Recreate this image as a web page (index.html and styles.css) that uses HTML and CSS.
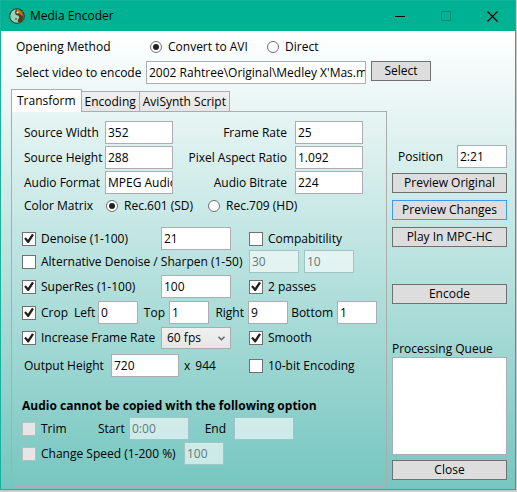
FILE: index.html
```html
<!DOCTYPE html>
<html lang="en">
<head>
<meta charset="utf-8">
<meta name="viewport" content="width=device-width, initial-scale=1">
<title>Media Encoder</title>
<link rel="stylesheet" href="styles.css">
</head>
<body>
<div class="window">
  <header class="titlebar">
    <svg class="app-icon" width="16" height="16" viewBox="0 0 16 16" aria-hidden="true">
      <circle cx="8" cy="8" r="7.8" fill="#2b3a2e"/>
      <circle cx="8" cy="8" r="6.800" fill="#93d3bd"/>
      <path d="M7.500 1.200A6.800 6.800 0 0 1 10.500 14.300C8.600 14.500 8.200 12.500 9.500 11C11 9 10 7.800 8 7.300C5.500 6.500 5.500 3 7.500 1.200Z" fill="#5a3a14"/>
      <path d="M8 1.500C11 1.600 13.800 4.500 13.900 7.800C12 7.500 11.500 6 10 5.500C8 4.500 7 3 8 1.500Z" fill="#c07a1e"/>
      <circle cx="8.500" cy="4.500" r="1.100" fill="#e0e3b8"/>
      <circle cx="7" cy="11" r="1.100" fill="#8a6a34"/>
    </svg>
    <h1 class="title">Media Encoder</h1>
    <div class="caption-buttons">
      <button class="caption" type="button" aria-label="Minimize"><svg width="11" height="11" viewBox="0 0 11 11"><path d="M0 5.500H10" stroke="#000" fill="none"/></svg></button>
      <button class="caption" type="button" aria-label="Maximize" disabled><svg width="11" height="11" viewBox="0 0 11 11"><path d="M.5 .5H9.500V9.500H.5Z" stroke="#078871" fill="none"/></svg></button>
      <button class="caption" type="button" aria-label="Close window"><svg width="11" height="11" viewBox="0 0 11 11"><path d="M.5 .5L10.500 10.500M10.500 .5L.5 10.500" stroke="#000" stroke-width="1.200" fill="none"/></svg></button>
    </div>
  </header>

  <main class="client">
    <div class="source">
      <div class="source-row method" role="radiogroup" aria-labelledby="method">
        <span id="method">Opening Method</span>
        <label class="option"><input type="radio" name="method" checked>Convert to AVI</label>
        <label class="option"><input type="radio" name="method">Direct</label>
      </div>
      <div class="source-row file">
        <label for="video">Select video to encode</label>
        <input class="field" id="video" type="text" value="2002 Rahtree\Original\Medley X'Mas.mpg">
        <button class="button" type="button">Select</button>
      </div>
    </div>

    <div class="columns">
      <section class="tabs">
        <div class="tab-list" role="tablist">
          <button class="tab selected" type="button" role="tab" aria-selected="true">Transform</button>
          <button class="tab" type="button" role="tab" aria-selected="false">Encoding</button>
          <button class="tab" type="button" role="tab" aria-selected="false">AviSynth Script</button>
        </div>
        <div class="panel" role="tabpanel">
          <div class="info">
            <label for="width">Source Width</label>
            <input class="field" id="width" type="text" value="352">
            <label class="end" for="rate">Frame Rate</label>
            <input class="field" id="rate" type="text" value="25">
            <label for="height">Source Height</label>
            <input class="field" id="height" type="text" value="288">
            <label class="end" for="ratio">Pixel Aspect Ratio</label>
            <input class="field" id="ratio" type="text" value="1.092">
            <label for="format">Audio Format</label>
            <input class="field" id="format" type="text" value="MPEG Audio">
            <label class="end" for="bitrate">Audio Bitrate</label>
            <input class="field" id="bitrate" type="text" value="224">
          </div>
          <div class="matrix" role="radiogroup" aria-labelledby="matrix">
            <span id="matrix">Color Matrix</span>
            <label class="option"><input type="radio" name="matrix" checked>Rec.601 (SD)</label>
            <label class="option"><input type="radio" name="matrix">Rec.709 (HD)</label>
          </div>

          <div class="filters">
            <div class="row">
              <label class="option"><input type="checkbox" checked>Denoise (1-100)</label>
              <input class="field wide" type="text" value="21" aria-label="Denoise strength">
              <label class="option"><input type="checkbox">Compabitility</label>
            </div>
            <div class="row alternative">
              <label class="option span"><input type="checkbox">Alternative Denoise / Sharpen (1-50)</label>
              <div class="pair">
                <input class="field" type="text" value="30" aria-label="Alternative denoise" disabled>
                <input class="field" type="text" value="10" aria-label="Sharpen" disabled>
              </div>
            </div>
            <div class="row">
              <label class="option"><input type="checkbox" checked>SuperRes (1-100)</label>
              <input class="field wide" type="text" value="100" aria-label="SuperRes strength">
              <label class="option"><input type="checkbox" checked>2 passes</label>
            </div>
            <div class="crop">
              <label class="option"><input type="checkbox" checked>Crop</label>
              <label for="left">Left</label><input class="field" id="left" type="text" value="0">
              <label for="top">Top</label><input class="field" id="top" type="text" value="1">
              <label for="right">Right</label><input class="field" id="right" type="text" value="9">
              <label for="bottom">Bottom</label><input class="field" id="bottom" type="text" value="1">
            </div>
            <div class="row">
              <label class="option"><input type="checkbox" checked>Increase Frame Rate</label>
              <span class="combo wide">
                <select aria-label="Frame rate"><option>60 fps</option></select>
                <svg width="7" height="5" viewBox="0 0 7 5" aria-hidden="true"><path d="M.5 .8L3.500 3.800L6.500 .8" stroke="#606060" stroke-width="1.400" fill="none"/></svg>
              </span>
              <label class="option"><input type="checkbox" checked>Smooth</label>
            </div>
            <div class="row output">
              <div class="size span">
                <label for="outheight">Output Height</label>
                <input class="field" id="outheight" type="text" value="720">
                <span>x</span><span>944</span>
              </div>
              <label class="option"><input type="checkbox">10-bit Encoding</label>
            </div>
          </div>

          <h2 class="heading">Audio cannot be copied with the following option</h2>
          <div class="trim">
            <label class="option"><input type="checkbox" disabled>Trim</label>
            <label for="start">Start</label><input class="field" id="start" type="text" value="0:00" disabled>
            <label class="end" for="end">End</label><input class="field" id="end" type="text" disabled>
          </div>
          <div class="speed">
            <label class="option"><input type="checkbox" disabled>Change Speed (1-200 %)</label>
            <input class="field" type="text" value="100" aria-label="Speed" disabled>
          </div>
        </div>
      </section>

      <aside class="side">
        <div class="position">
          <label for="position">Position</label>
          <input class="field" id="position" type="text" value="2:21">
        </div>
        <div class="previews">
          <button class="button" type="button">Preview Original</button>
          <button class="button active" type="button">Preview Changes</button>
          <button class="button" type="button">Play In MPC-HC</button>
        </div>
        <button class="button encode" type="button">Encode</button>
        <label class="queue-label" for="queue">Processing Queue</label>
        <select class="queue" id="queue" size="4"></select>
        <button class="button" type="button">Close</button>
      </aside>
    </div>
  </main>
</div>
</body>
</html>
```
FILE: styles.css
```css
* {
  box-sizing: border-box;
}

body {
  margin: 0;
  min-height: 100vh;
  display: flex;
  padding: 0 1px 2px 0;
  background: #cfcaca;
  color: #000;
  font: 12px/16px "Open Sans", "Noto Sans", sans-serif;
  white-space: nowrap;
}

button,
input,
select {
  margin: 0;
  color: inherit;
  font: inherit;
}

.window {
  flex: 1;
  min-width: 0;
  display: flex;
  flex-direction: column;
  border: 1px solid #14b39a;
}

.titlebar {
  display: flex;
  align-items: center;
  height: 30px;
  padding-left: 8px;
  background: #00b294;
}

.title {
  margin: 0 0 0 5px;
  font-size: 12px;
  font-weight: 400;
}

.caption-buttons {
  display: flex;
  margin-left: auto;
}

.caption {
  display: grid;
  place-items: center;
  width: 46px;
  height: 28px;
  padding: 0;
  border: 0;
  background: none;
}

.client {
  flex: 1;
  display: flex;
  flex-direction: column;
  padding: 6px 8px 2px 10px;
  background: linear-gradient(#fff, #76c6c0);
}

.source {
  padding-left: 5px;
}

.source-row {
  display: grid;
  align-items: center;
}

.method {
  grid-template-columns: 134px 117px 1fr;
  height: 20px;
}

.file {
  grid-template-columns: 130px minmax(0, 220px) 60px;
  margin-top: 4px;
}

.file .button {
  align-self: start;
  margin-left: 5px;
  width: 60px;
}

.option {
  display: flex;
  align-items: center;
  gap: 5px;
}

.field {
  width: 100%;
  min-width: 0;
  height: 23px;
  padding: 0 0 0 2px;
  border: 1px solid #abadb3;
  border-radius: 0;
  background: #fff;
  outline: 0;
}

.field:disabled {
  border-color: #9fc4c4;
  background: #fff9;
  color: #5f7a78;
}

input[type="checkbox"],
input[type="radio"] {
  appearance: none;
  flex: none;
  display: grid;
  place-items: center;
  width: 14px;
  height: 14px;
  border: 1px solid #707070;
  background: #fff;
}

input[type="radio"] {
  width: 12px;
  height: 12px;
  margin-right: 1px;
  border-radius: 50%;
}

input[type="radio"]:checked::before {
  content: "";
  width: 6px;
  height: 6px;
  border-radius: 50%;
  background: #212121;
}

input[type="checkbox"]:checked::before {
  content: "";
  width: 10px;
  height: 10px;
  background: #212121;
  clip-path: polygon(2% 52%, 18% 38%, 40% 62%, 80% 2%, 100% 14%, 48% 96%, 36% 96%);
}

input[type="checkbox"]:disabled {
  border-color: #bcbcbc;
  background: #e6e6e6;
}

.button {
  height: 20px;
  padding: 0;
  border: 1px solid #707070;
  background: #ddd;
  line-height: 18px;
}

.button.active {
  border-color: #3c9af0;
}

.columns {
  flex: 1;
  display: grid;
  grid-template-columns: minmax(0, 1fr) 115px;
  gap: 5px;
  margin-top: 5px;
}

.tabs {
  display: flex;
  flex-direction: column;
}

.tab-list {
  display: flex;
  align-items: flex-end;
}

.tab {
  height: 20px;
  padding: 0 3px;
  border: 1px solid #acacac;
  border-bottom: 0;
  border-left-width: 0;
  background: linear-gradient(#f0f0f0, #e5e5e5);
}

.tab.selected {
  z-index: 1;
  height: 23px;
  margin-bottom: -1px;
  padding: 0 5px;
  border-left-width: 1px;
  background: #fff;
}

.panel {
  flex: 1;
  padding: 9px 9px 0 10px;
  border: 1px solid #acacac;
}

.info {
  display: grid;
  grid-template-columns: 81px 68px 122px 68px;
  row-gap: 2px;
  align-items: center;
  padding-left: 2px;
}

.end {
  justify-self: end;
  padding-right: 8px;
}

.matrix {
  display: grid;
  grid-template-columns: 82px 102px 1fr;
  align-items: center;
  height: 24px;
  padding-left: 2px;
}

.filters {
  display: grid;
  gap: 3px;
  margin-top: 9px;
}

.row {
  display: grid;
  grid-template-columns: 139px 88px minmax(0, 1fr);
  align-items: center;
}

.alternative {
  margin: -3px 0 -1px;
}

.wide {
  width: 70px;
}

.span {
  grid-column: span 2;
}

.pair {
  display: grid;
  grid-template-columns: 50px 50px;
  gap: 5px;
}

.crop {
  display: grid;
  grid-template-columns: 52px 24px 40px 31px 40px 39px 40px 49px 40px;
  align-items: center;
}

.crop label + .field ~ label {
  justify-self: end;
  padding-right: 4px;
}

.combo {
  display: grid;
  align-items: center;
}

.combo > * {
  grid-area: 1 / 1;
}

.combo select {
  appearance: none;
  width: 100%;
  height: 22px;
  padding: 0 0 0 5px;
  border: 1px solid #acacac;
  border-radius: 0;
  background: linear-gradient(#f0f0f0, #e5e5e5);
}

.combo svg {
  justify-self: end;
  margin-right: 6px;
  pointer-events: none;
}

.output {
  margin-top: 2px;
}

.size {
  display: flex;
  align-items: center;
  gap: 5px;
  padding-left: 2px;
}

.size label {
  width: 82px;
}

.size .field {
  width: 68px;
}

.heading {
  margin: 21px 0 3px;
  font-size: 12px;
  font-weight: 700;
}

.trim {
  display: grid;
  grid-template-columns: 76px 31px 60px 45px 60px;
  align-items: center;
}

.speed {
  display: grid;
  grid-template-columns: 162px 40px;
  align-items: center;
  margin-top: 2px;
}

.side {
  display: flex;
  flex-direction: column;
  padding: 56px 0 7px;
}

.position {
  display: grid;
  grid-template-columns: minmax(0, 1fr) 50px;
  align-items: center;
  padding-left: 6px;
}

.previews {
  display: grid;
  gap: 7px;
  margin-top: 5px;
}

.encode {
  margin-top: 37px;
}

.queue-label {
  margin-top: 37px;
}

.queue {
  flex: 1;
  width: 100%;
  min-height: 60px;
  margin-bottom: 5px;
  border: 1px solid #abadb3;
  border-radius: 0;
  background: #fff;
  outline: 0;
}
```
